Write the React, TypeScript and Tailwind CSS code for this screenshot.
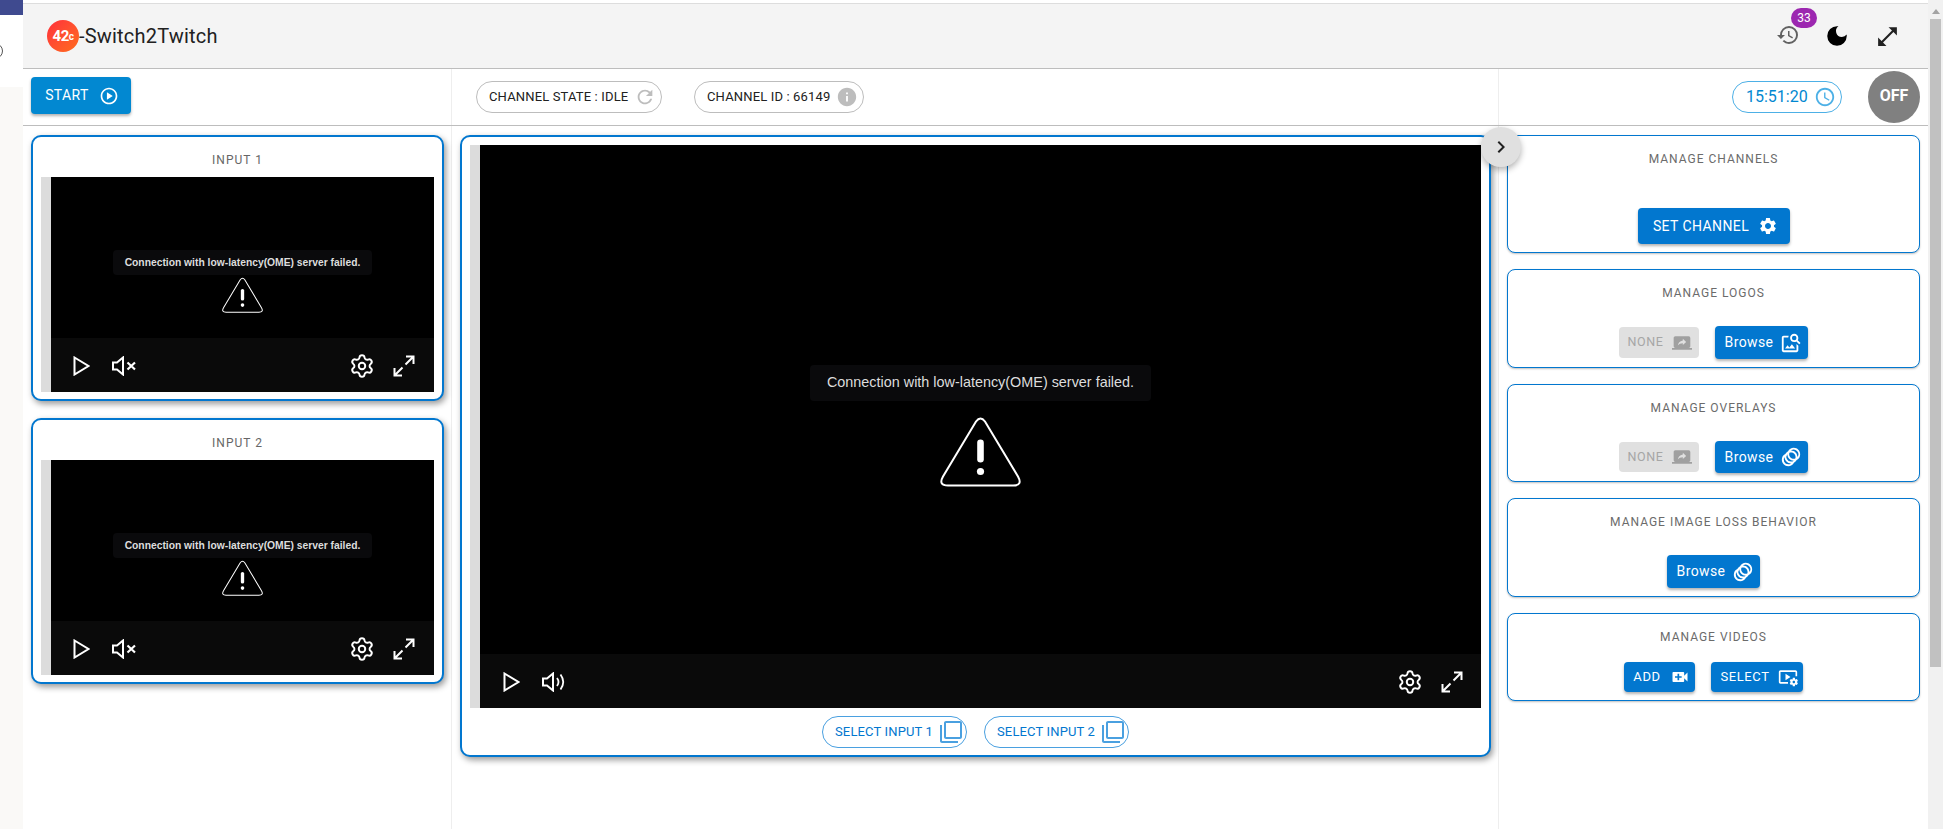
import type { ReactNode } from "react";
import {
  MdAnimation,
  MdChevronRight,
  MdDarkMode,
  MdFilterNone,
  MdHistory,
  MdInfo,
  MdOpenInFull,
  MdOutlineImageSearch,
  MdOutlinePlayCircle,
  MdOutlineVideoSettings,
  MdRefresh,
  MdAccessTime,
  MdScreenShare,
  MdSettings,
  MdVideoCall,
} from "react-icons/md";
import { Settings } from "lucide-react";

const WarningIcon = ({ className }: { className: string }) => (
  <svg viewBox="0 0 81 70" className={className}>
    <path
      d="M36 5Q40.5-1 45 5L78 60Q83 69 73 69L8 69Q-2 69 3 60Z"
      fill="none"
      stroke="white"
      strokeWidth="2"
    />
    <rect x="37.2" y="23" width="6.6" height="23" rx="3.3" fill="white" />
    <circle cx="40.5" cy="55" r="3.6" fill="white" />
  </svg>
);

const PlayIcon = () => (
  <svg width="17" height="20" viewBox="0 0 17 20">
    <path d="M1.5 1.5L15.5 10L1.5 18.5Z" fill="none" stroke="white" strokeWidth="2" />
  </svg>
);

const SpeakerIcon = ({ muted }: { muted: boolean }) => (
  <svg width="24" height="20" viewBox="0 0 24 20" fill="none" stroke="white" strokeWidth="2">
    <path d="M1 6.5H5L11 1.5V18.5L5 13.5H1Z" />
    {muted ? (
      <path d="M15.5 6.5L23 13.5M23 6.5L15.5 13.5" strokeWidth="2.2" />
    ) : (
      <path d="M15 6Q18 10 15 14M18.5 2.5Q24 10 18.5 17.5" strokeWidth="1.8" />
    )}
  </svg>
);

const ExpandIcon = () => (
  <svg width="22" height="22" viewBox="0 0 22 22" fill="none" stroke="white" strokeWidth="2">
    <path d="M13 1.5H20.5V9M20.5 1.5L12.5 9.5M1.5 13V20.5H9M1.5 20.5L9.5 12.5" />
  </svg>
);

// lecteur video : bande grise a gauche, ecran noir, barre de controles
const Player = ({ large = false, muted = false }: { large?: boolean; muted?: boolean }) => (
  <div className={large ? "flex h-[563px] w-full" : "flex h-[215px] w-full"}>
    <div className="w-[10px] shrink-0 bg-[#dcdcdc]" />
    <div className="relative flex flex-1 flex-col justify-end bg-black">
      <div
        className={
          large
            ? "flex h-[54px] items-center justify-between bg-[#0a0a0a] pl-[23px] pr-[18px] pt-[2px]"
            : "flex h-[54px] items-center justify-between bg-[#0a0a0a] pl-[22px] pr-[19px] pt-[2px]"
        }
      >
        <div className="flex items-center gap-[22px]">
          <PlayIcon />
          <SpeakerIcon muted={muted} />
        </div>
        <div className="flex items-center gap-[18px]">
          <Settings size={26} color="white" strokeWidth={1.8} />
          <ExpandIcon />
        </div>
      </div>
      {large ? (
        <div className="absolute inset-0 flex flex-col items-center justify-center pb-[2px]">
          <div className="mb-[15px] flex h-[36px] items-center rounded-[4px] bg-[#0a0a0c] px-[17px] font-['Liberation_Sans',sans-serif] text-[14.4px] text-[#dddddd]">
            Connection with low-latency(OME) server failed.
          </div>
          <WarningIcon className="h-[71px] w-[81px]" />
        </div>
      ) : (
        <div className="absolute inset-0 flex flex-col items-center justify-center pb-[6px]">
          <div className="mb-[2px] flex h-[25px] items-center rounded-[4px] bg-[#0a0a0c] px-[12px] font-['Liberation_Sans',sans-serif] text-[10.3px] font-bold text-[#dddddd]">
            Connection with low-latency(OME) server failed.
          </div>
          <WarningIcon className="h-[36px] w-[41px]" />
        </div>
      )}
    </div>
  </div>
);

const InputCard = ({ title }: { title: string }) => (
  <div className="flex flex-col rounded-[10px] border-2 border-[#0277cf] bg-white px-[8px] pb-[7px] shadow-[2px_3px_6px_rgba(0,0,0,0.4)]">
    <div className="flex h-[40px] items-center justify-center pt-[6px] text-[12px] tracking-[1px] text-[#666666]">
      {title}
    </div>
    <Player muted />
  </div>
);

const BlueButton = ({
  children,
  className,
}: {
  children: ReactNode;
  className: string;
}) => (
  <button
    className={`flex items-center justify-center rounded-[4px] bg-[#0277cf] pl-[4px] text-white shadow-[0_2px_3px_rgba(0,0,0,0.3)] ${className}`}
  >
    {children}
  </button>
);

const NoneButton = ({ className }: { className: string }) => (
  <div
    className={`flex w-[80px] items-center justify-center gap-[9px] rounded-[4px] bg-[#e0e0e0] pl-[2px] text-[12.5px] tracking-[0.6px] text-[#a6a6a6] ${className}`}
  >
    NONE
    <MdScreenShare size={20} className="text-[#a0a0a0]" />
  </div>
);

const ManageCard = ({
  title,
  height,
  children,
}: {
  title: string;
  height: string;
  children: ReactNode;
}) => (
  <div
    className={`flex flex-col items-center justify-between rounded-[8px] border border-[#0277cf] bg-white pb-[8px] pt-[15px] shadow-[0_1px_2px_rgba(0,0,0,0.25)] ${height}`}
  >
    <div className="text-[12px] leading-[16px] tracking-[1px] text-[#6b6b6b]">{title}</div>
    <div className="flex items-center justify-center gap-[16px]">{children}</div>
  </div>
);

const SelectChip = ({ label }: { label: string }) => (
  <div className="flex h-[32px] w-[145px] items-center justify-between rounded-full border border-[#4aa0e0] pl-[12px] pr-[3px] text-[13px] tracking-[0.15px] text-[#0277cf]">
    {label}
    <MdFilterNone size={24} className="text-[#4aa0e0]" />
  </div>
);

export default function App() {
  return (
    <div className="flex h-screen w-screen overflow-hidden bg-white font-['Roboto',sans-serif]">
      {/* morceau de la page derriere */}
      <div className="flex w-[23px] shrink-0 flex-col overflow-hidden">
        <div className="h-[15px] bg-[#3f4a8f]" />
        <div className="h-[72px] bg-white pt-[28px]">
          <div className="-ml-[13px] h-[16px] w-[16px] rounded-full border border-[#555555]" />
        </div>
        <div className="flex-1 bg-[#faf9f7]" />
      </div>

      <div className="flex min-w-0 flex-1 flex-col pt-[3px]">
        {/* header */}
        <header className="flex h-[66px] shrink-0 items-center justify-between border-y border-b-[#bdbdbd] border-t-[#dddddd] bg-[#f4f4f4] pl-[24px] pr-[28px]">
          <div className="flex items-center">
            <div className="flex h-[32px] w-[32px] items-center justify-center rounded-full bg-gradient-to-br from-[#ff2b3a] to-[#ff6a1a] text-[15px] font-bold tracking-[-0.5px] text-white">
              42<span className="text-[10px]">c</span>
            </div>
            <span className="text-[20px] tracking-[0.2px] text-[#212121]">-Switch2Twitch</span>
          </div>
          <div className="flex items-center">
            <div className="relative mr-[24px] -translate-y-[1px]">
              <MdHistory size={24} className="text-[#616161]" />
              <span className="absolute -top-[15px] left-[15px] flex h-[20px] w-[26px] items-center justify-center rounded-full bg-[#9c27b0] text-[12px] text-white">
                33
              </span>
            </div>
            <MdDarkMode size={26} className="mr-[25px] text-black" />
            <MdOpenInFull size={25} className="text-[#212121]" />
          </div>
        </header>

        {/* toolbar */}
        <div className="grid h-[57px] shrink-0 grid-cols-[429px_1047px_1fr] border-b border-[#bdbdbd]">
          <div className="border-r border-[#eeeeee] pl-[8px] pt-[8px]">
            <button className="flex h-[37px] w-[100px] items-center justify-center gap-[10px] rounded-[4px] bg-[#0288d1] pl-[2px] text-[14px] tracking-[0.4px] text-white shadow-[0_2px_3px_rgba(0,0,0,0.3)]">
              START
              <MdOutlinePlayCircle size={20} />
            </button>
          </div>
          <div className="flex items-center gap-[32px] border-r border-[#eeeeee] pl-[24px]">
            <div className="flex h-[32px] w-[186px] items-center justify-between rounded-full border border-[#bdbdbd] pl-[12px] pr-[5px] text-[13px] tracking-[0.15px] text-[#212121]">
              CHANNEL STATE : IDLE
              <MdRefresh size={22} className="text-[#bdbdbd]" />
            </div>
            <div className="flex h-[32px] w-[170px] items-center justify-between rounded-full border border-[#bdbdbd] pl-[12px] pr-[5px] text-[13px] tracking-[0.15px] text-[#212121]">
              CHANNEL ID : 66149
              <MdInfo size={22} className="text-[#bdbdbd]" />
            </div>
          </div>
          <div className="flex items-center justify-end pr-[8px]">
            <div className="mr-[26px] flex h-[32px] w-[110px] items-center justify-between rounded-full border border-[#4db0e6] pl-[13px] pr-[5px] text-[16px] text-[#0288d1]">
              15:51:20
              <MdAccessTime size={22} className="text-[#4db0e6]" />
            </div>
            <div className="flex h-[52px] w-[52px] items-center justify-center rounded-full bg-[#808080] pb-[2px] text-[16px] font-bold text-white">
              OFF
            </div>
          </div>
        </div>

        {/* colonnes */}
        <div className="grid min-h-0 flex-1 grid-cols-[429px_1047px_1fr]">
          <div className="flex flex-col gap-[17px] border-r border-[#eeeeee] pl-[8px] pr-[7px] pt-[9px]">
            <InputCard title="INPUT 1" />
            <InputCard title="INPUT 2" />
          </div>

          <div className="relative border-r border-[#eeeeee] pl-[8px] pr-[7px] pt-[9px]">
            <div className="flex h-[622px] flex-col rounded-[10px] border-2 border-[#0277cf] bg-white px-[8px] pt-[8px] shadow-[2px_3px_6px_rgba(0,0,0,0.4)]">
              <Player large />
              <div className="mt-[8px] flex justify-center gap-[17px]">
                <SelectChip label="SELECT INPUT 1" />
                <SelectChip label="SELECT INPUT 2" />
              </div>
            </div>
            <button className="absolute -right-[23px] top-[1px] flex h-[40px] w-[40px] items-center justify-center rounded-full bg-[#e0e0e0] text-[#212121] shadow-[0_3px_6px_rgba(0,0,0,0.3)]">
              <MdChevronRight size={24} />
            </button>
          </div>

          <div className="flex flex-col gap-[16px] pl-[8px] pr-[8px] pt-[9px]">
            <ManageCard title="MANAGE CHANNELS" height="h-[118px]">
              <BlueButton className="h-[36px] w-[152px] gap-[9px] text-[14px] tracking-[0.4px]">
                SET CHANNEL
                <MdSettings size={20} />
              </BlueButton>
            </ManageCard>
            <ManageCard title="MANAGE LOGOS" height="h-[99px]">
              <NoneButton className="h-[31px]" />
              <BlueButton className="h-[33px] w-[93px] gap-[7px] text-[14px] tracking-[0.4px]">
                Browse
                <MdOutlineImageSearch size={22} />
              </BlueButton>
            </ManageCard>
            <ManageCard title="MANAGE OVERLAYS" height="h-[98px]">
              <NoneButton className="h-[30px]" />
              <BlueButton className="h-[32px] w-[93px] gap-[7px] text-[14px] tracking-[0.4px]">
                Browse
                <MdAnimation size={22} />
              </BlueButton>
            </ManageCard>
            <ManageCard title="MANAGE IMAGE LOSS BEHAVIOR" height="h-[99px]">
              <BlueButton className="h-[33px] w-[93px] gap-[7px] text-[14px] tracking-[0.4px]">
                Browse
                <MdAnimation size={22} />
              </BlueButton>
            </ManageCard>
            <ManageCard title="MANAGE VIDEOS" height="h-[88px]">
              <BlueButton className="h-[30px] w-[71px] gap-[9px] text-[13px] tracking-[0.6px]">
                ADD
                <MdVideoCall size={20} />
              </BlueButton>
              <BlueButton className="h-[30px] w-[92px] gap-[8px] text-[13px] tracking-[0.6px]">
                SELECT
                <MdOutlineVideoSettings size={20} />
              </BlueButton>
            </ManageCard>
          </div>
        </div>
      </div>

      {/* barre de defilement */}
      <div className="flex w-[15px] shrink-0 flex-col items-center bg-[#f1f1f1]">
        <div className="mt-[9px] h-0 w-0 border-x-[4px] border-b-[5px] border-x-transparent border-b-[#a3a3a3]" />
        <div className="mt-[5px] h-[648px] w-[11px] bg-[#c1c1c1]" />
      </div>
    </div>
  );
}
